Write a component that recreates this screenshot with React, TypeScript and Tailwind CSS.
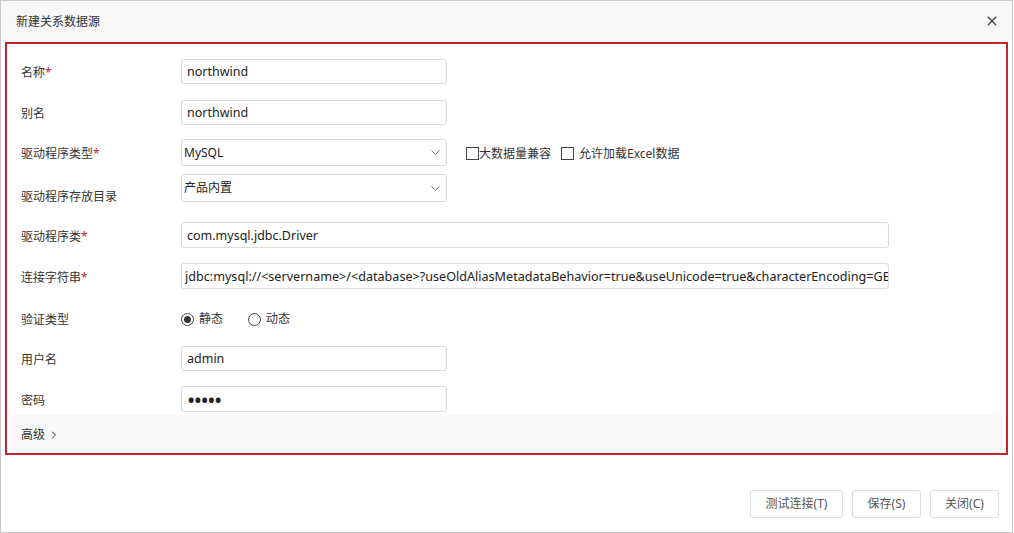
import { X, ChevronDown, ChevronRight } from "lucide-react";

const Req = () => <span className="text-[#c4262e]">*</span>;

const TextBox = ({ value, width, type = "text", size = "text-[12.5px] px-[5px]" }: { value: string; width: string; type?: string; size?: string }) => (
  <input
    readOnly
    type={type}
    value={value}
    className={`h-full ${width} rounded-[3px] border border-[#dadada] bg-white ${size} text-[#222] outline-none`}
  />
);

const SelectBox = ({ value }: { value: string }) => (
  <div className="flex h-full w-[266px] items-center justify-between rounded-[3px] border border-[#dadada] bg-white pl-[2px] pr-[3px] text-[12px] text-[#222]">
    <span>{value}</span>
    <ChevronDown size={15} strokeWidth={1.3} className="text-[#555]" />
  </div>
);

const Box = () => <span className="inline-block h-[13px] w-[13px] border border-[#444] bg-white" />;

const Label = ({ children }: { children: React.ReactNode }) => (
  <span className="w-[171px] pl-[11px] pt-[3px]">{children}</span>
);

export default function App() {
  return (
    <div className="h-[533px] w-[1014px] bg-white font-['Noto_Sans','Noto_Sans_CJK_SC',sans-serif] text-[12px] text-[#333]">
      <div className="flex h-full w-[1013px] flex-col border border-[#c9c9c9]">
        <div className="flex h-[40px] items-center justify-between bg-[#f7f7f7] pl-[15px] pr-[12px]">
          <span className="pt-[2px] text-[12px] text-[#333]">新建关系数据源</span>
          <X size={16} strokeWidth={1.6} className="text-[#333]" />
        </div>
        <div className="mx-[4px] mt-[1px] flex h-[413px] flex-col border-2 border-[#c4262e] px-[3px] pt-[15px]">
          <div className="flex h-[25px] items-center">
            <Label>名称<Req /></Label>
            <TextBox value="northwind" width="w-[266px]" />
          </div>
          <div className="mt-[16px] flex h-[25px] items-center">
            <Label>别名</Label>
            <TextBox value="northwind" width="w-[266px]" />
          </div>
          <div className="mt-[14px] flex h-[27px] items-center">
            <Label>驱动程序类型<Req /></Label>
            <SelectBox value="MySQL" />
            <span className="ml-[19px] flex items-center pt-[2px]">
              <Box />
              <span>大数据量兼容</span>
            </span>
            <span className="ml-[10px] flex items-center pt-[2px]">
              <Box />
              <span className="ml-[5px]">允许加载Excel数据</span>
            </span>
          </div>
          <div className="mt-[8px] flex h-[28px] items-start">
            <span className="mt-[14px] w-[171px] pl-[11px]">驱动程序存放目录</span>
            <SelectBox value="产品内置" />
          </div>
          <div className="mt-[20px] flex h-[26px] items-center">
            <Label>驱动程序类<Req /></Label>
            <TextBox value="com.mysql.jdbc.Driver" width="w-[708px]" />
          </div>
          <div className="mt-[15px] flex h-[26px] items-center">
            <Label>连接字符串<Req /></Label>
            <input
              readOnly
              value="jdbc:mysql://<servername>/<database>?useOldAliasMetadataBehavior=true&useUnicode=true&characterEncoding=GBK"
              className="h-full w-[708px] rounded-[3px] border border-[#dadada] bg-white pl-[3px] pr-0 text-[12.6px] text-[#222] outline-none"
            />
          </div>
          <div className="mt-[18px] flex h-[22px] items-center">
            <Label>验证类型</Label>
            <span className="flex items-center pt-[2px]">
              <span className="flex h-[13px] w-[13px] items-center justify-center rounded-full border border-[#444]">
                <span className="h-[7px] w-[7px] rounded-full bg-[#333]" />
              </span>
              <span className="ml-[5px]">静态</span>
            </span>
            <span className="ml-[25px] flex items-center pt-[2px]">
              <span className="h-[13px] w-[13px] rounded-full border border-[#444]" />
              <span className="ml-[5px]">动态</span>
            </span>
          </div>
          <div className="mt-[17px] flex h-[25px] items-center">
            <Label>用户名</Label>
            <TextBox value="admin" width="w-[266px]" />
          </div>
          <div className="mt-[15px] flex h-[26px] items-center">
            <Label>密码</Label>
            <TextBox value="admin" type="password" width="w-[266px]" size="pl-[5px] text-[22px] tracking-[-1.5px]" />
          </div>
          <div className="mt-[3px] flex flex-1 items-center bg-[#f8f8fa] pl-[11px] pt-[2px]">
            <span>高级</span>
            <ChevronRight size={12} strokeWidth={2} className="ml-[3px] text-[#333]" />
          </div>
        </div>
        <div className="flex flex-1 items-start justify-end gap-[9px] pr-[13px] pt-[35px]">
          <button className="h-[28px] w-[93px] rounded-[3px] border border-[#dcdcdc] bg-white text-[12px] text-[#555]">测试连接(T)</button>
          <button className="h-[28px] w-[69px] rounded-[3px] border border-[#dcdcdc] bg-white text-[12px] text-[#555]">保存(S)</button>
          <button className="h-[28px] w-[69px] rounded-[3px] border border-[#dcdcdc] bg-white text-[12px] text-[#555]">关闭(C)</button>
        </div>
      </div>
    </div>
  );
}
